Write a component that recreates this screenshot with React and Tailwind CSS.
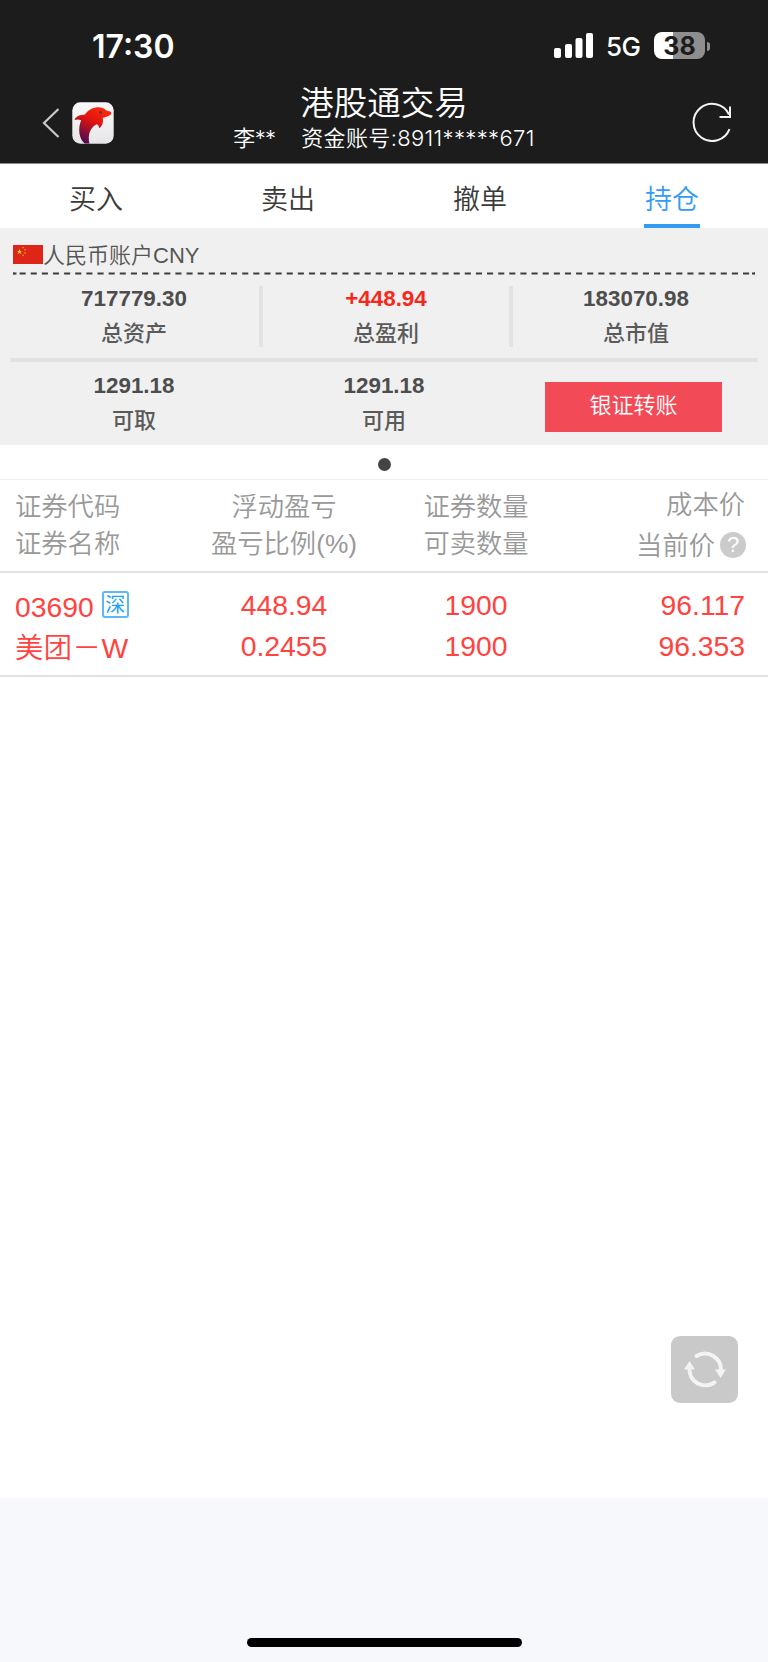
import { useState } from "react";

const TABS = ["买入", "卖出", "撤单", "持仓"];

const COLUMNS = [
  { lines: ["证券代码", "证券名称"], className: "w-[192px] pl-[15px] text-left" },
  { lines: ["浮动盈亏", "盈亏比例(%)"], className: "w-[184px] text-center" },
  { lines: ["证券数量", "可卖数量"], className: "w-[200px] text-center" },
];

const HOLDINGS = [
  {
    code: "03690",
    market: "深",
    name: "美团－W",
    profit: "448.94",
    ratio: "0.2455",
    amount: "1900",
    sellable: "1900",
    cost: "96.117",
    price: "96.353",
  },
];

function DolphinLogo() {
  return (
    <svg className="ml-[12px] h-[42px] w-[42px]" viewBox="0 0 42 42">
      <defs>
        <linearGradient id="dolphin" x1="0.75" x2="0.25" y1="0" y2="1">
          <stop offset="0" stopColor="#ff2a0a" />
          <stop offset="0.4" stopColor="#e0140f" />
          <stop offset="0.7" stopColor="#8e0f35" />
          <stop offset="1" stopColor="#4a0a50" />
        </linearGradient>
        <linearGradient id="tile" x1="0" x2="0" y1="0" y2="1">
          <stop offset="0" stopColor="#fafafa" />
          <stop offset="1" stopColor="#e6e6e8" />
        </linearGradient>
      </defs>
      <rect fill="url(#tile)" height="41.4" rx="8" width="41.4" x="0.3" y="0.3" />
      <path
        d="M2.5 18C4 13.5 8.5 13 13 12.4C16.5 7.6 21 5.2 27 5.2C31 5.3 33.3 7.2 34.8 8.8C37 9.2 39.4 9.4 39.3 11.4C39.2 13.3 34.5 14.6 30.7 15.8C31.6 19.8 30.4 24 27.3 26.2C26.8 24 26.2 22.9 24.8 22.2C18.5 25.2 15.5 32 17.4 41.6L12.8 41.6C7.4 37.5 5.3 27 9.2 18.3C7 17.3 5 17.3 2.5 18Z"
        fill="url(#dolphin)"
      />
      <circle cx="28.6" cy="10.4" fill="#4d3a4c" r="1.3" />
    </svg>
  );
}

function StatusBar() {
  return (
    <div className="flex h-[84px] items-center pt-2 font-['Inter'] text-white">
      <div className="mt-[2px] ml-[92px] text-[32px] leading-none font-semibold">17:30</div>
      <div className="mr-[58px] ml-auto flex items-center">
        <svg className="-mt-[2px] h-[25px] w-[40px]" fill="#fff" viewBox="0 0 40 25">
          <rect height="10" rx="2" width="7" x="0" y="15" />
          <rect height="14" rx="2" width="7" x="11" y="11" />
          <rect height="20" rx="2" width="7" x="21.5" y="5" />
          <rect height="25" rx="2" width="7" x="32" y="0" />
        </svg>
        <span className="mt-0.5 ml-[12px] w-[36px] text-[26px] leading-none font-medium tracking-tight">
          5G
        </span>
        <span className="-mt-px ml-[12px] flex h-[27px] w-[51px] items-center justify-center rounded-[8px] bg-linear-to-r from-white from-38% to-[#8e8e8e] to-38% pt-px text-[25px] leading-none font-bold text-[#1c1c1c]">
          38
        </span>
        <span className="ml-[2px] h-[9px] w-[3px] rounded-r-full bg-[#8e8e8e]" />
      </div>
    </div>
  );
}

function NavBar() {
  return (
    <div className="flex h-[79px] justify-between text-white">
      <div className="flex w-[180px] items-center pb-[2px] pl-[42px]">
        <svg className="h-[30px] w-[18px]" fill="none" viewBox="0 0 18 30">
          <path d="M16.5 1L2 15L16.5 29" stroke="#c9c9c9" strokeWidth="2.2" />
        </svg>
        <DolphinLogo />
      </div>
      <div className="flex flex-col items-center font-[350]">
        <h1 className="pt-px text-[33.5px] leading-[36px]">港股通交易</h1>
        <p className="flex gap-[26px] text-[22px] leading-[34px] whitespace-nowrap">
          <span className="tracking-[-0.7px]">李**</span>
          <span className="tracking-[0.35px]">资金账号:8911*****671</span>
        </p>
      </div>
      <div className="flex w-[180px] items-center justify-end pr-[34px] pb-[2px]">
        <svg className="h-[42px] w-[42px]" fill="none" stroke="#f2f2f2" strokeWidth="2" viewBox="0 0 42 42">
          <path d="M37.5 27.2A18.6 18.6 0 1 1 37 12.5" />
          <path d="M38 4.5V15H27.5" />
        </svg>
      </div>
    </div>
  );
}

function Flag() {
  return (
    <svg className="-mt-[2px] h-[19px] w-[30px]" viewBox="0 0 30 19">
      <rect fill="#de2618" height="19" width="30" />
      <path
        d="M6.5 3.8L7.3 6H9L7.6 7.1L8.2 9L6.5 7.9L4.8 9L5.4 7.1L4 6H5.7Z"
        fill="#fbdc1c"
      />
      <g fill="#f2a01e">
        <circle cx="10" cy="2.6" r="0.8" />
        <circle cx="12" cy="4.8" r="0.8" />
        <circle cx="12" cy="8" r="0.8" />
        <circle cx="10" cy="10.4" r="0.8" />
      </g>
    </svg>
  );
}

function Stat({ value, label, valueClassName = "text-[#4d4d4d]" }) {
  return (
    <div className="text-center">
      <div className={`text-[22.4px] leading-[26px] font-bold ${valueClassName}`}>{value}</div>
      <div className="mt-[7px] text-[22px] leading-[30px] font-medium text-[#5a5a5a]">{label}</div>
    </div>
  );
}

function AccountSummary() {
  return (
    <section className="h-[217px] bg-[#f0f0f0] pt-[12px]">
      <div className="flex h-[32px] items-center pb-[2px] pl-[13px] text-[22px] font-[350] text-[#555]">
        <Flag />
        <span>人民币账户CNY</span>
      </div>
      <svg className="ml-[13px] block h-[3px] w-[742px]" stroke="#3d3d3d" strokeWidth="2">
        <line
          strokeDasharray="6.1 5.03"
          strokeDashoffset="4.56"
          x1="0"
          x2="742"
          y1="1.5"
          y2="1.5"
        />
        <line x1="0" x2="3.5" y1="1.5" y2="1.5" />
        <line x1="739" x2="742" y1="1.5" y2="1.5" />
      </svg>
      <div className="mt-[11px] flex h-[61px] pl-[9px]">
        <div className="w-[250px]">
          <Stat label="总资产" value="717779.30" />
        </div>
        <div className="w-[250px] border-l-4 border-[#e3e3e3]">
          <Stat label="总盈利" value="+448.94" valueClassName="text-[#f5291b]" />
        </div>
        <div className="w-[250px] border-l-4 border-[#e3e3e3]">
          <Stat label="总市值" value="183070.98" />
        </div>
      </div>
      <div className="mx-[10px] mt-[11px] h-1 bg-[#e3e3e3]" />
      <div className="mt-[11px] flex pl-[9px]">
        <div className="w-[250px]">
          <Stat label="可取" value="1291.18" />
        </div>
        <div className="w-[250px]">
          <Stat label="可用" value="1291.18" />
        </div>
        <button
          className="mt-[9px] ml-[36px] h-[50px] w-[177px] bg-[#f34a57] pb-[2px] text-[22px] leading-none font-[350] text-white"
          type="button"
        >
          银证转账
        </button>
      </div>
    </section>
  );
}

function HoldingsTable() {
  return (
    <section>
      <div className="flex h-[94px] border-t border-b-2 border-t-[#eee] border-b-[#e2e2e2] pt-[9px] text-[26.3px] leading-[37px] font-[350] text-[#999]">
        {COLUMNS.map((column) => (
          <div className={column.className} key={column.lines[0]}>
            {column.lines.map((line) => (
              <div key={line}>{line}</div>
            ))}
          </div>
        ))}
        <div className="-mt-[4px] flex w-[169px] flex-col items-end leading-[41px]">
          <div>成本价</div>
          <div className="flex items-center gap-[5px]">
            当前价
            <span className="-mt-[3px] -mr-[1px] flex h-[26px] w-[26px] items-center justify-center rounded-full bg-[#cbcbcb] text-[22px] leading-none text-white">
              ?
            </span>
          </div>
        </div>
      </div>

      {HOLDINGS.map((item) => (
        <div
          className="flex h-[104px] border-b-2 border-[#e2e2e2] pt-[12px] text-[28.3px] leading-[41px] font-[350] text-[#ff433f]"
          key={item.code}
        >
          <div className="w-[192px] pt-[2px] pl-[15px]">
            <div className="flex h-[41px]">
              {item.code}
              <span className="mt-[4px] ml-[8px] flex h-[27px] w-[27px] items-center justify-center rounded-[3px] border-2 border-[#5db8fb] text-[20px] leading-none font-normal text-[#1da1fa]">
                {item.market}
              </span>
            </div>
            <div className="tracking-[0.5px]">{item.name}</div>
          </div>
          <div className="w-[184px] text-center">
            <div>{item.profit}</div>
            <div>{item.ratio}</div>
          </div>
          <div className="w-[200px] text-center">
            <div>{item.amount}</div>
            <div>{item.sellable}</div>
          </div>
          <div className="w-[169px] text-right">
            <div>{item.cost}</div>
            <div>{item.price}</div>
          </div>
        </div>
      ))}
    </section>
  );
}

export default function App() {
  const [activeTab, setActiveTab] = useState("持仓");

  return (
    <div className="flex h-[1662px] w-[768px] flex-col overflow-hidden bg-white font-['Liberation_Sans','Noto_Sans_CJK_SC',sans-serif]">
      <header className="h-[164px] border-b border-[#8c8c8c] bg-[#1c1c1c] font-['Inter','Noto_Sans_CJK_SC',sans-serif]">
        <StatusBar />
        <NavBar />
      </header>

      <nav className="grid h-[64px] grid-cols-4 justify-items-center">
        {TABS.map((tab) => (
          <button
            className={`h-[64px] w-[56px] border-b-4 pt-[12px] text-[27px] leading-none font-[350] whitespace-nowrap ${
              tab === activeTab
                ? "border-[#349bf3] text-[#349bf3]"
                : "border-transparent text-[#3a3a3a]"
            }`}
            key={tab}
            onClick={() => setActiveTab(tab)}
            type="button"
          >
            {tab}
          </button>
        ))}
      </nav>

      <AccountSummary />

      <div className="flex h-[34px] items-center justify-center pt-[5px]">
        <span className="h-[13px] w-[13px] rounded-full bg-[#444]" />
      </div>

      <HoldingsTable />

      <main className="flex flex-1 items-end justify-end pr-[30px] pb-[95px]">
        <button
          aria-label="刷新"
          className="flex h-[67px] w-[67px] items-center justify-center rounded-[9px] bg-[#c9c9c9]"
          type="button"
        >
          <svg className="h-[42px] w-[42px]" fill="none" viewBox="0 0 42 42">
            <g stroke="#f3f3f3" strokeLinecap="round" strokeWidth="4">
              <path d="M12.5 7A16 16 0 0 1 36.8 22" />
              <path d="M30.5 33.5A16 16 0 0 1 5.5 19" />
            </g>
            <path d="M31 20.5H42L36.5 29Z" fill="#f3f3f3" />
            <path d="M0 20.5H11L5.5 12Z" fill="#f3f3f3" />
          </svg>
        </button>
      </main>

      <footer className="flex h-[164px] items-end justify-center bg-[#f6f8fb] pb-[15px]">
        <div className="h-[9px] w-[275px] rounded-full bg-black" />
      </footer>
    </div>
  );
}
